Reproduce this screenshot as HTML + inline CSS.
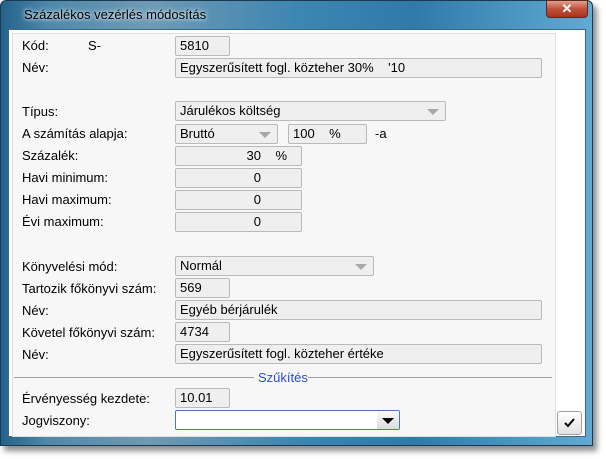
<!DOCTYPE html>
<html><head><style>
body{margin:0;width:606px;height:459px;background:#fff;position:relative;overflow:hidden;font-family:"Liberation Sans",sans-serif;font-size:13px;color:#000}
.a{position:absolute}
.frame{left:0;top:0;width:593px;height:446px;background:linear-gradient(90deg,#24628a 0%,#4f88aa 8%,#6f9ab4 25%,#3d86b2 50%,#2f7aaa 70%,#62aad2 100%);border:1px solid #1b3a52;box-sizing:border-box;border-radius:6px 6px 0 0;box-shadow:4px 5px 6px rgba(0,0,0,.45)}
.title{left:24px;top:7px;font-size:13px;color:#000;text-shadow:0 0 6px #d8e8f2,0 0 3px #d8e8f2}
.close{left:546px;top:0;width:42px;height:18px;background:linear-gradient(#e0a090,#c0503a 50%,#a8321e);border:1px solid #5a2a20;box-sizing:border-box;border-radius:0 0 4px 4px;color:#fff;font-weight:bold;text-align:center;font-size:13px;line-height:16px}
.client{left:8px;top:29px;width:578px;height:408px;background:#fff;border:1px solid #3a6a8a;box-sizing:border-box}
.panel{left:12px;top:33px;width:544px;height:404px;background:#f7f7f7;border:1px solid #e0e0e0;box-sizing:border-box}
.l{position:absolute;left:22px}
.f{position:absolute;height:20px;background:#efefef;border:1px solid #b9b9b9;border-radius:2px;box-sizing:border-box;padding-left:4px;line-height:18px;white-space:pre}
.r{text-align:right;padding-right:40px}
.arr{position:absolute;right:6px;top:7px;width:0;height:0;border-left:6px solid transparent;border-right:6px solid transparent;border-top:6px solid #a8a8a8}
</style></head><body>
<div class="a frame"></div>
<div class="a title">Százalékos vezérlés módosítás</div>
<div class="a close">✕</div>
<div class="a client"></div>
<div class="a panel"></div>

<div class="l" style="top:38px">Kód:</div><div class="a" style="left:88px;top:38px">S-</div>
<div class="f" style="left:175px;top:36px;width:55px">5810</div>
<div class="l" style="top:60px">Név:</div>
<div class="f" style="left:175px;top:58px;width:367px">Egyszerűsített fogl. közteher 30%    '10</div>

<div class="l" style="top:104px">Típus:</div>
<div class="f" style="left:175px;top:101px;width:271px">Járulékos költség<div class="arr"></div></div>
<div class="l" style="top:126px">A számítás alapja:</div>
<div class="f" style="left:175px;top:124px;width:103px">Bruttó<div class="arr"></div></div>
<div class="f" style="left:288px;top:124px;width:79px">100    %</div>
<div class="a" style="left:375px;top:126px">-a</div>
<div class="l" style="top:148px">Százalék:</div>
<div class="f" style="left:175px;top:146px;width:127px;text-align:right;padding-right:14px">30    %</div>
<div class="l" style="top:170px">Havi minimum:</div>
<div class="f r" style="left:175px;top:168px;width:127px">0</div>
<div class="l" style="top:192px">Havi maximum:</div>
<div class="f r" style="left:175px;top:190px;width:127px">0</div>
<div class="l" style="top:214px">Évi maximum:</div>
<div class="f r" style="left:175px;top:212px;width:127px">0</div>

<div class="l" style="top:259px">Könyvelési mód:</div>
<div class="f" style="left:175px;top:256px;width:199px">Normál<div class="arr"></div></div>
<div class="l" style="top:281px">Tartozik főkönyvi szám:</div>
<div class="f" style="left:175px;top:278px;width:55px">569</div>
<div class="l" style="top:303px">Név:</div>
<div class="f" style="left:175px;top:300px;width:367px">Egyéb bérjárulék</div>
<div class="l" style="top:325px">Követel főkönyvi szám:</div>
<div class="f" style="left:175px;top:322px;width:55px">4734</div>
<div class="l" style="top:347px">Név:</div>
<div class="f" style="left:175px;top:344px;width:367px">Egyszerűsített fogl. közteher értéke</div>

<div class="a" style="left:14px;top:377px;width:240px;height:1px;background:#a0a0a0"></div>
<div class="a" style="left:308px;top:377px;width:244px;height:1px;background:#a0a0a0"></div>
<div class="a" style="left:258px;top:370px;color:#2a4bd8">Szűkítés</div>

<div class="l" style="top:391px">Érvényesség kezdete:</div>
<div class="f" style="left:175px;top:388px;width:55px">10.01</div>
<div class="l" style="top:413px">Jogviszony:</div>
<div class="f" style="left:175px;top:410px;width:225px;background:#fff;border-color:#4a7ab0"><div style="position:absolute;right:0;top:0;width:22px;height:18px;background:linear-gradient(#fafafa,#dcdcdc)"></div><div class="arr" style="border-top-color:#000;right:5px"></div></div>
<div class="a" style="left:557px;top:411px;width:25px;height:24px;border:1px solid #a0a0a0;border-radius:3px;box-sizing:border-box;background:linear-gradient(#fff,#e2e2e2)"><svg width="23" height="22" style="position:absolute;left:0;top:0"><path d="M7 11 L10 14 L16 7" fill="none" stroke="#000" stroke-width="2"/></svg></div>
</body></html>
